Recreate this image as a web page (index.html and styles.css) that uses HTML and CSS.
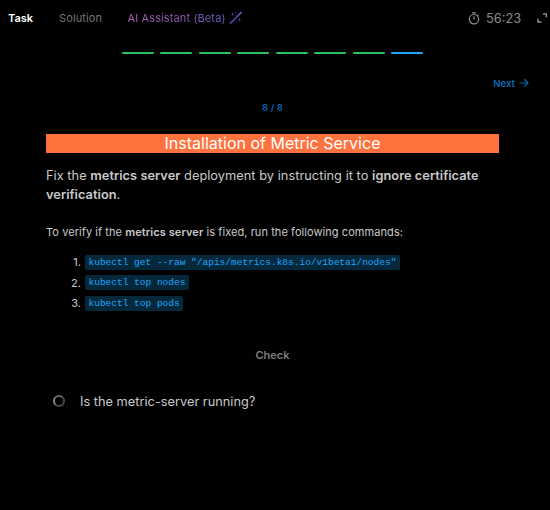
FILE: index.html
```html
<!DOCTYPE html>
<html lang="en">
<head>
<meta charset="utf-8">
<title>Task</title>
<link rel="stylesheet" href="styles.css">
</head>
<body>
<header class="topbar">
  <nav class="tabs">
    <span class="tab tab-active">Task</span>
    <span class="tab tab-solution">Solution</span>
    <span class="tab tab-ai"><span class="ai-label">AI Assistant (Beta)</span>
      <svg class="wand" viewBox="0 0 14 14" fill="none" stroke="#5b50b5"><path d="M1 12.8 9.7 3.9" stroke-width="1.5"/><path d="M9.6 4 12.6 1.2" stroke-width="1.8"/><path d="M2.2 3.3h2.6M3.5 2v2.6M6 1.8h1.4M9.2 8.8h2.6M10.5 7.5v2.6M6.4 4.7h1M7.2 10.5h1" stroke-width="1" opacity=".65"/></svg>
    </span>
  </nav>
  <div class="status">
    <svg class="clock" viewBox="0 0 12 13" fill="none" stroke="#8b8b8b" stroke-width="1.2"><circle cx="6" cy="7.2" r="4.7"/><path d="M4 .8h4M6 4.2v3.5M9.5 3.6l1-1"/></svg>
    <span class="time">56:23</span>
    <svg class="expand" viewBox="0 0 11 10" fill="none" stroke="#8b8b8b" stroke-width="1.5"><path d="M6 .9h3.3v3.4M1 5.7v3.4h3.6"/></svg>
  </div>
</header>
<div class="progress"><i></i><i></i><i></i><i></i><i></i><i></i><i></i><i class="current"></i></div>
<div class="next"><span>Next</span><svg class="arrow" viewBox="0 0 10 10" fill="none" stroke="#0b67b2" stroke-width="1.2"><path d="M.5 5h8.3M5.2 1.2 9 5 5.2 8.8"/></svg></div>
<main class="content">
  <div class="counter">8 / 8</div>
  <h1 class="title">Installation of Metric Service</h1>
  <p class="lead">Fix the <b>metrics server</b> deployment by instructing it to <b>ignore certificate verification</b>.</p>
  <p class="verify">To verify if the <b>metrics server</b> is fixed, run the following commands:</p>
  <ol class="commands">
    <li><span>1.</span><code>kubectl get --raw "/apis/metrics.k8s.io/v1beta1/nodes"</code></li>
    <li><span>2.</span><code>kubectl top nodes</code></li>
    <li><span>3.</span><code>kubectl top pods</code></li>
  </ol>
  <div class="check">Check</div>
  <div class="question"><span class="spinner"></span><span>Is the metric-server running?</span></div>
</main>
</body>
</html>
```
FILE: styles.css
```css
* { box-sizing: border-box; }
body { margin: 0; height: 510px; overflow: hidden; background: #000; color: #c9c9c9; font-family: Inter, sans-serif; }
svg { display: block; flex: none; }
.topbar { display: flex; justify-content: space-between; height: 36px; padding: 0 2px 0 8px; }
.tabs, .status, .tab { display: flex; align-items: center; }
.tab { font-size: 11px; line-height: 16px; white-space: nowrap; letter-spacing: 0.12px; }
.tab-active { width: 51px; color: #fff; font-weight: 600; letter-spacing: 0; }
.tab-solution { width: 68.5px; color: #747474; }
.tab-ai { gap: 3.5px; }
.ai-label { background: linear-gradient(90deg, #b45aae, #6a5bc4); background-clip: text; -webkit-background-clip: text; color: transparent; }
.wand { width: 14px; height: 14px; }
.clock { width: 12px; height: 13px; margin-right: 6px; }
.time { width: 51px; color: #8b8b8b; font-size: 12.8px; }
.expand { width: 11px; height: 10px; }
.progress { display: grid; grid-template-columns: repeat(8, 32px); justify-content: space-between; width: 301px; margin: 16px 0 0 122px; }
.progress i { height: 2px; border-radius: 1px; background: #2cc35f; }
.progress .current { background: #1ca5fb; }
.next { display: flex; justify-content: flex-end; align-items: center; gap: 4px; height: 16px; margin: 21px 21px 0 0; color: #0b67b2; font-size: 9.6px; font-weight: 600; }
.arrow { width: 10px; height: 10px; }
.content { width: 453px; margin-left: 46px; }
.counter { height: 16px; margin-top: 9px; line-height: 16px; text-align: center; color: #0b67b2; font-size: 9.6px; font-weight: 600; }
.title { margin: 18px 0 0; height: 19px; line-height: 19px; background: #ff713d; color: #fff; font-size: 16px; font-weight: 400; text-align: center; }
.lead { margin: 13px 0 0; font-size: 12.8px; line-height: 19.2px; letter-spacing: 0.03px; }
b { font-weight: 600; }
.verify { margin: 20px 0 0; font-size: 11px; line-height: 16px; letter-spacing: 0.07px; }
.commands { display: grid; gap: 6px; margin: 14.6px 0 0 25px; padding: 0; list-style: none; }
.commands li { display: flex; align-items: center; gap: 4px; height: 14.6px; font-size: 11px; line-height: 14px; }
.commands li span { width: 10px; display: flex; justify-content: flex-end; }
code { height: 15px; padding: 0 3.5px; border-radius: 2px; background: #06283b; color: #1ca5fb; font: 9.5px/15px "Liberation Mono", monospace; white-space: pre; }
.check { display: grid; place-items: center; height: 34px; margin-top: 27.6px; border-radius: 12px; background: #010101; color: #7d7d7d; font-size: 11px; font-weight: 600; }
.question { display: flex; align-items: center; gap: 15px; height: 20px; margin-top: 19px; padding-left: 7px; font-size: 12.8px; }
.spinner { width: 12px; height: 12px; border: 2px solid #4b4b4b; border-left-color: #858585; border-top-color: #686868; border-radius: 50%; }
```
